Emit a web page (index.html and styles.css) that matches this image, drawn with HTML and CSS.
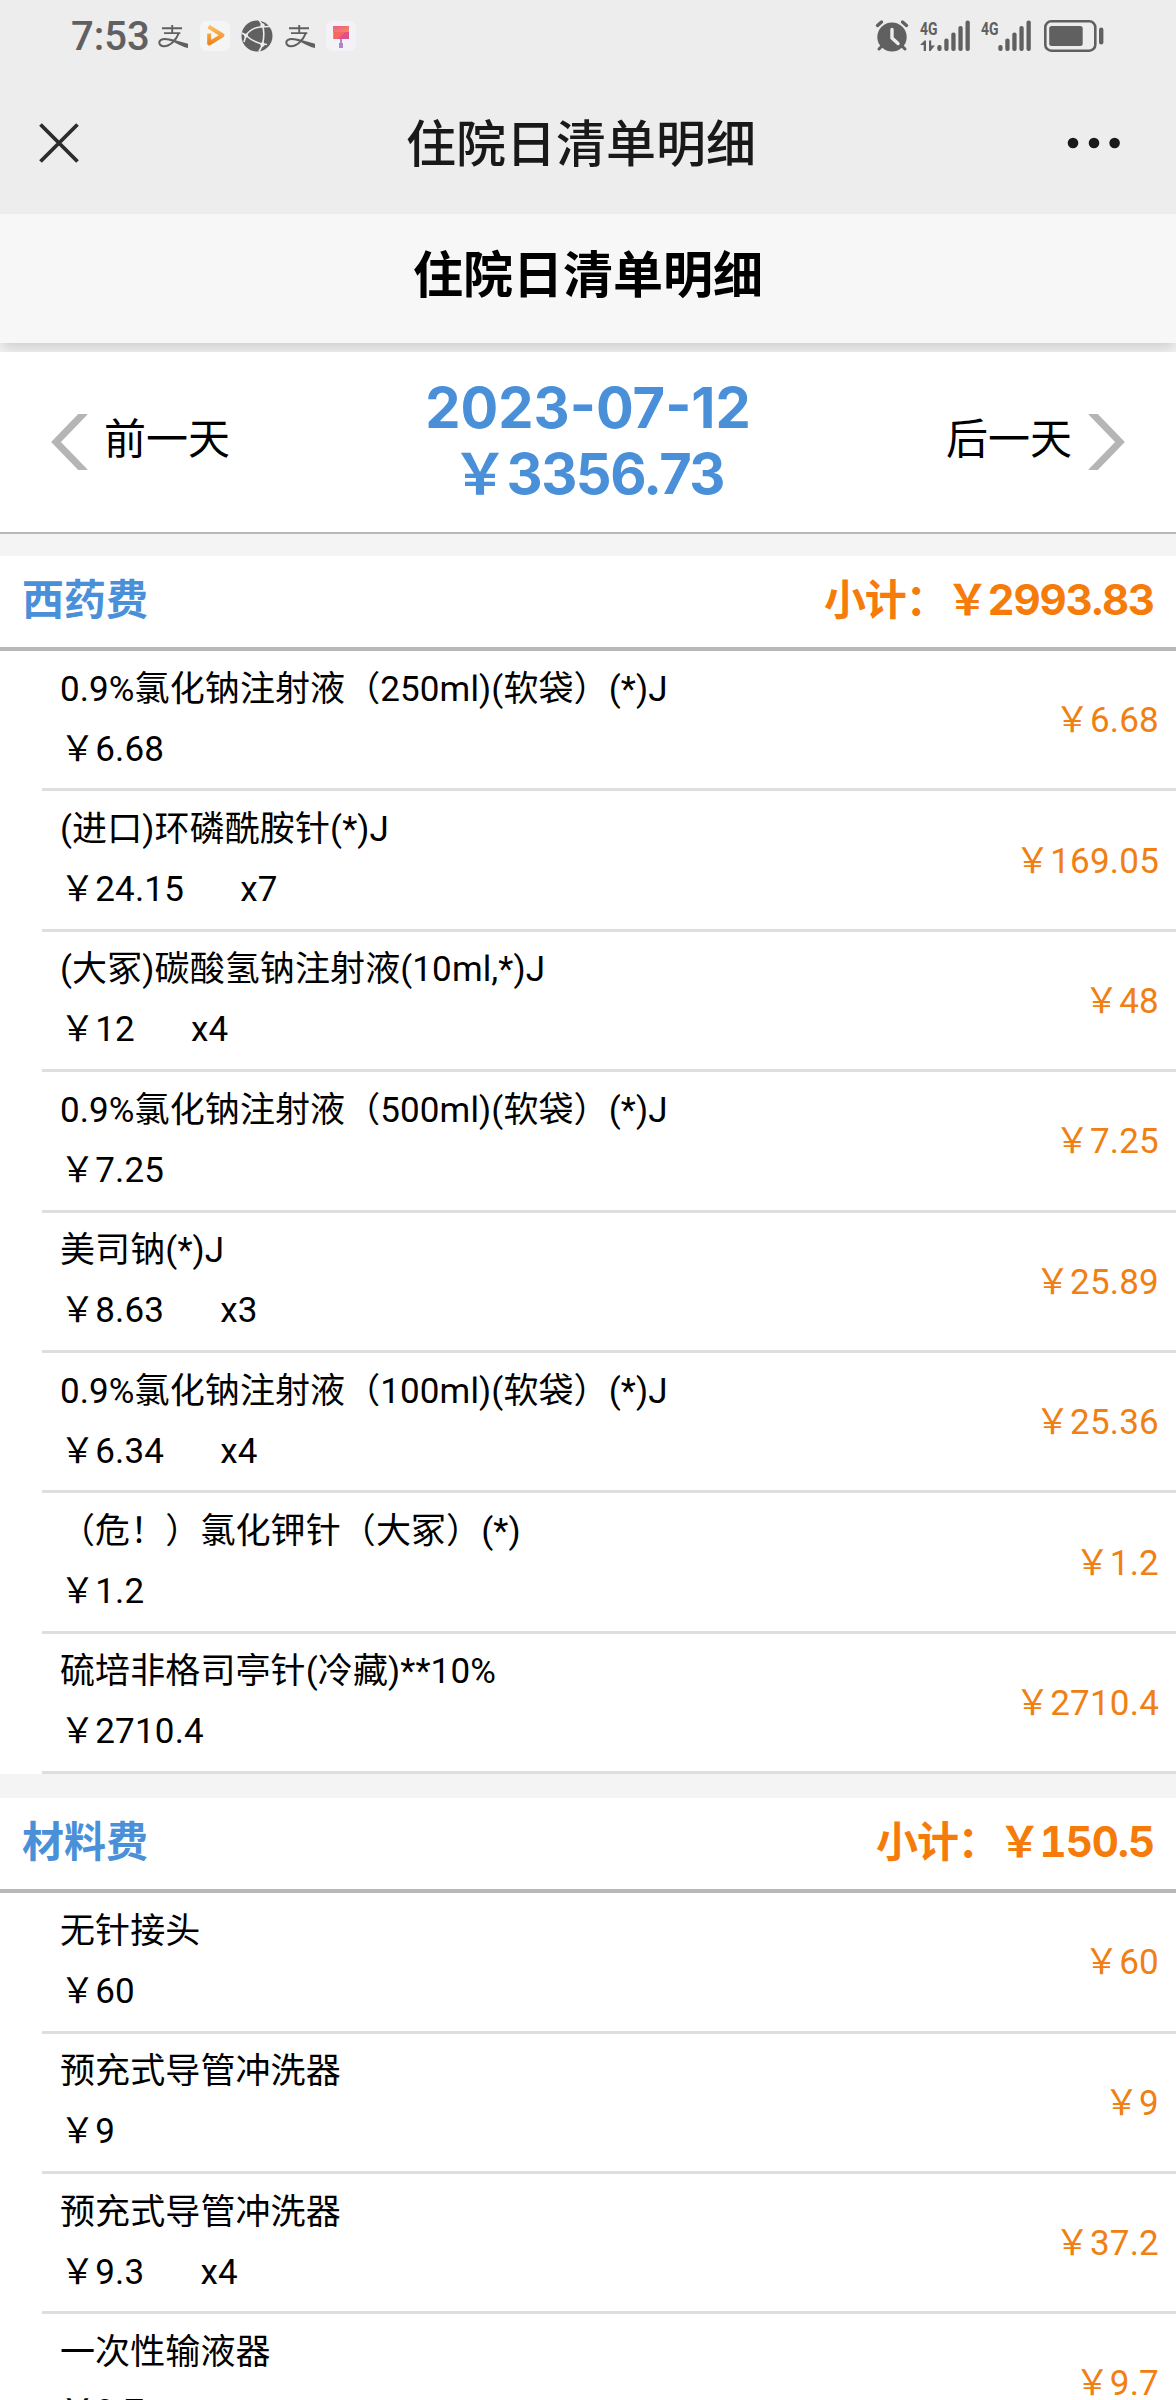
FILE: index.html
```html
<!DOCTYPE html>
<html lang="zh-CN">
<head>
  <meta charset="UTF-8">
  <title>住院日清单明细</title>
  <link rel="stylesheet" href="styles.css">
</head>
<body>

  <div class="status-bar">
    <span class="time">7:53</span>
    <div class="status-left">
      <svg class="icon" viewBox="0 0 30 30">
        <g fill="none" stroke="#606060" stroke-width="1.9">
          <path d="M4 7.3h20M14.2 4v8M6 12.1h16.3"/>
          <path d="M20.8 12.2C18.5 18.5 12 25.6 5.5 25.2 1 24.8 0 20.8 3 18.9c3.5-2 8.5-.5 13 1.3"/>
        </g>
        <path d="M12 17.6c6 1.8 12 4 18 5.1v4.3c-4-.8-9-3.2-14.5-6.3z" fill="#606060"/>
      </svg>
      <svg class="icon" viewBox="0 0 30 30">
        <defs>
          <linearGradient id="play" x1="0" y1="0" x2="0" y2="1">
            <stop offset="0" stop-color="#fbbf5c"/>
            <stop offset="1" stop-color="#ef8420"/>
          </linearGradient>
        </defs>
        <rect width="30" height="30" rx="7" fill="#f4f6f6"/>
        <path d="M8.5 5.5L22.5 14.3 9.2 22.5V12.5" fill="none" stroke="url(#play)" stroke-width="4" stroke-linejoin="round"/>
      </svg>
      <svg class="icon globe" viewBox="0 0 32 32">
        <circle cx="16" cy="16" r="15.5" fill="#606060"/>
        <g fill="none" stroke="#ededed" stroke-width="1.6">
          <path d="M5 15.5C9 9 15 6 30.5 6.5M5 15.5C10 20 16 24 26 24.5M21.5 5C23.5 11 23 18 21.5 25M5 15.5L1 13M5 15.5L3 22M21.5 5L18 0M21.5 25L18 31.5"/>
        </g>
        <circle cx="5" cy="15.5" r="1.9" fill="#ededed"/>
        <circle cx="21.5" cy="5.5" r="2.2" fill="#ededed"/>
        <circle cx="21.5" cy="24.5" r="2.2" fill="#ededed"/>
      </svg>
      <svg class="icon" viewBox="0 0 30 30">
        <g fill="none" stroke="#606060" stroke-width="1.9">
          <path d="M4 7.3h20M14.2 4v8M6 12.1h16.3"/>
          <path d="M20.8 12.2C18.5 18.5 12 25.6 5.5 25.2 1 24.8 0 20.8 3 18.9c3.5-2 8.5-.5 13 1.3"/>
        </g>
        <path d="M12 17.6c6 1.8 12 4 18 5.1v4.3c-4-.8-9-3.2-14.5-6.3z" fill="#606060"/>
      </svg>
      <svg class="icon" viewBox="0 0 30 30">
        <defs>
          <linearGradient id="brush" x1="0" y1="0" x2="1" y2="1">
            <stop offset="0" stop-color="#ef5a86"/>
            <stop offset="1" stop-color="#f58a62"/>
          </linearGradient>
        </defs>
        <rect width="30" height="30" rx="7" fill="#f3f3f7"/>
        <path d="M7 5h16v6H7z" fill="url(#brush)"/>
        <path d="M7.5 11h15.5v7H7.5z" fill="#e0508a"/>
        <path d="M7.5 11h12l-8 7h-4z" fill="#f4685f"/>
        <path d="M14 18h2v4h1v5h-4v-5h1z" fill="#b184d0"/>
      </svg>
    </div>
    <div class="status-right">
      <svg class="alarm" viewBox="0 0 34 32">
        <g fill="none" stroke="#606060" stroke-linecap="round">
          <path d="M2.5 5.5l4-3.5M31.5 5.5l-4-3.5" stroke-width="3.4"/>
          <path d="M7 26l-3 3M27 26l3 3" stroke-width="3"/>
        </g>
        <ellipse cx="17" cy="17" rx="14.7" ry="14.5" fill="#606060"/>
        <path d="M17 9.5v8.5l6 5.5" fill="none" stroke="#ededed" stroke-width="3.4" stroke-linecap="round"/>
      </svg>
      <svg class="signal" viewBox="0 0 50 32">
        <text x="0" y="14.5" textLength="17.5" lengthAdjust="spacingAndGlyphs">4G</text>
        <path d="M0 25l4.5-4.5H6V31H3.7v-6zM9 20.5h2.2V25.5H15L10.5 31H9z"/>
        <rect x="17.3" y="25" width="4.3" height="6" rx="2"/>
        <rect x="24.3" y="18.5" width="4.3" height="12.5" rx="2"/>
        <rect x="31.3" y="12.5" width="4.3" height="18.5" rx="2"/>
        <rect x="38.4" y="6" width="4.3" height="25" rx="2"/>
        <rect x="45.5" y="0.5" width="4.3" height="30.5" rx="2"/>
      </svg>
      <svg class="signal" viewBox="0 0 50 32">
        <text x="0" y="14.5" textLength="17.5" lengthAdjust="spacingAndGlyphs">4G</text>
        <rect x="17.3" y="25" width="4.3" height="6" rx="2"/>
        <rect x="24.3" y="18.5" width="4.3" height="12.5" rx="2"/>
        <rect x="31.3" y="12.5" width="4.3" height="18.5" rx="2"/>
        <rect x="38.4" y="6" width="4.3" height="25" rx="2"/>
        <rect x="45.5" y="0.5" width="4.3" height="30.5" rx="2"/>
      </svg>
      <svg class="battery" viewBox="0 0 60 32">
        <rect x="1.3" y="1.3" width="50" height="29.4" rx="6" fill="none" stroke="#606060" stroke-width="2.6"/>
        <rect x="5.2" y="6" width="33.5" height="20" rx="2.5" fill="#606060"/>
        <rect x="55" y="7.5" width="4.4" height="17" rx="2.2" fill="#606060"/>
      </svg>
    </div>
  </div>

  <div class="title-bar">
    <svg class="close" viewBox="0 0 40 40">
      <path d="M1.5 1.5l37 37M38.5 1.5l-37 37" stroke="#2c2c2c" stroke-width="3.8"/>
    </svg>
    <span class="title">住院日清单明细</span>
    <svg class="more" viewBox="0 0 54 12">
      <circle cx="6" cy="6" r="5.3"/>
      <circle cx="27" cy="6" r="5.3"/>
      <circle cx="47.6" cy="6" r="5.3"/>
    </svg>
  </div>

  <h1>住院日清单明细</h1>

  <div class="day-nav">
    <a class="day prev">
      <svg class="arrow" viewBox="0 0 38 56"><path d="M34 -2L5 28l29 30" /></svg>
      <span>前一天</span>
    </a>
    <div class="summary">
      <div class="date">2023-07-12</div>
      <div class="total">&#xFFE5;3356.73</div>
    </div>
    <a class="day next">
      <span>后一天</span>
      <svg class="arrow" viewBox="0 0 38 56"><path d="M4 -2l29 30L4 58" /></svg>
    </a>
  </div>

  <div class="section">
    <div class="section-head">
      <span class="name">西药费</span>
      <span class="subtotal">小计&#xFF1A;&#xFFE5;2993.83</span>
    </div>
    <ul>
      <li>
        <div class="info"><p>0.9%氯化钠注射液&#xFF08;250ml)(软袋&#xFF09;(*)J</p><p class="price">&#xFFE5;6.68</p></div>
        <span class="amount">&#xFFE5;6.68</span>
      </li>
      <li>
        <div class="info"><p>(进口)环磷酰胺针(*)J</p><p class="price">&#xFFE5;24.15<span class="qty">x7</span></p></div>
        <span class="amount">&#xFFE5;169.05</span>
      </li>
      <li>
        <div class="info"><p>(大冢)碳酸氢钠注射液(10ml,*)J</p><p class="price">&#xFFE5;12<span class="qty">x4</span></p></div>
        <span class="amount">&#xFFE5;48</span>
      </li>
      <li>
        <div class="info"><p>0.9%氯化钠注射液&#xFF08;500ml)(软袋&#xFF09;(*)J</p><p class="price">&#xFFE5;7.25</p></div>
        <span class="amount">&#xFFE5;7.25</span>
      </li>
      <li>
        <div class="info"><p>美司钠(*)J</p><p class="price">&#xFFE5;8.63<span class="qty">x3</span></p></div>
        <span class="amount">&#xFFE5;25.89</span>
      </li>
      <li>
        <div class="info"><p>0.9%氯化钠注射液&#xFF08;100ml)(软袋&#xFF09;(*)J</p><p class="price">&#xFFE5;6.34<span class="qty">x4</span></p></div>
        <span class="amount">&#xFFE5;25.36</span>
      </li>
      <li>
        <div class="info"><p>&#xFF08;危&#xFF01;&#xFF09;氯化钾针&#xFF08;大冢&#xFF09;(*)</p><p class="price">&#xFFE5;1.2</p></div>
        <span class="amount">&#xFFE5;1.2</span>
      </li>
      <li>
        <div class="info"><p>硫培非格司亭针(冷藏)**10%</p><p class="price">&#xFFE5;2710.4</p></div>
        <span class="amount">&#xFFE5;2710.4</span>
      </li>
    </ul>
  </div>

  <div class="section">
    <div class="section-head">
      <span class="name">材料费</span>
      <span class="subtotal">小计&#xFF1A;&#xFFE5;150.5</span>
    </div>
    <ul>
      <li>
        <div class="info"><p>无针接头</p><p class="price">&#xFFE5;60</p></div>
        <span class="amount">&#xFFE5;60</span>
      </li>
      <li>
        <div class="info"><p>预充式导管冲洗器</p><p class="price">&#xFFE5;9</p></div>
        <span class="amount">&#xFFE5;9</span>
      </li>
      <li>
        <div class="info"><p>预充式导管冲洗器</p><p class="price">&#xFFE5;9.3<span class="qty">x4</span></p></div>
        <span class="amount">&#xFFE5;37.2</span>
      </li>
      <li>
        <div class="info"><p>一次性输液器</p><p class="price">&#xFFE5;9.7</p></div>
        <span class="amount">&#xFFE5;9.7</span>
      </li>
    </ul>
  </div>

</body>
</html>
```
FILE: styles.css
```css
* {
  box-sizing: border-box;
}

body {
  margin: 0;
  height: 2400px;
  overflow: hidden;
  background-color: #f4f4f4;
  color: #000;
  font-family: Roboto, "Noto Sans CJK SC", sans-serif;
  font-size: 35px;
}

svg {
  display: block;
  flex: none;
  overflow: visible;
}

.status-bar {
  display: flex;
  align-items: center;
  height: 72px;
  padding: 0 72px 0 71px;
  background-color: #ededed;
}

.time {
  width: 87px;
  padding-top: 2px;
  color: #606060;
  font-size: 40px;
  font-weight: 500;
  line-height: 70px;
}

.status-left {
  display: flex;
  align-items: center;
  gap: 11.5px;
}

.icon {
  width: 30px;
  height: 30px;
}

.globe {
  width: 32px;
  height: 32px;
}

.status-right {
  display: flex;
  align-items: center;
  gap: 11px;
  margin-left: auto;
}

.alarm {
  width: 34px;
  height: 32px;
}

.signal {
  width: 50px;
  height: 32px;
  fill: #606060;
}

.signal text {
  font-family: Roboto, sans-serif;
  font-size: 19px;
  font-weight: bold;
}

.battery {
  width: 60px;
  height: 32px;
  margin-left: 2px;
}

.title-bar {
  display: flex;
  align-items: center;
  justify-content: space-between;
  height: 142px;
  padding: 0 55px 0 39px;
  background-color: #ededed;
}

.close {
  width: 40px;
  height: 40px;
}

.title {
  padding: 0 0 6px 16px;
  color: #191919;
  font-size: 50px;
  font-weight: 500;
}

.more {
  width: 54px;
  height: 12px;
  fill: #191919;
}

h1 {
  margin: 0 0 9px;
  height: 129px;
  background-color: #f7f7f7;
  box-shadow: 0 8px 12px -2px rgba(0,0,0,0.15);
  font-size: 50px;
  line-height: 125px;
  text-align: center;
}

.day-nav {
  position: relative;
  display: flex;
  align-items: center;
  justify-content: space-between;
  height: 182px;
  padding: 0 51px;
  background-color: #fff;
  border-bottom: 2px solid #b8b8b8;
}

.day {
  display: flex;
  align-items: center;
  gap: 15px;
  font-size: 42px;
}

.day span {
  padding-bottom: 13px;
}

.arrow {
  width: 38px;
  height: 56px;
  overflow: hidden;
  fill: none;
  stroke: #b5b5b5;
  stroke-width: 7;
}

.summary {
  padding-bottom: 2px;
  color: #4a90d9;
  font-family: Inter, "Noto Sans CJK SC", sans-serif;
  font-size: 56px;
  font-weight: bold;
  line-height: 66px;
  text-align: center;
}

.total {
  letter-spacing: -1.5px;
}

.section {
  margin-top: 22px;
}

.section + .section {
  margin-top: 24px;
}

.section-head {
  display: flex;
  align-items: center;
  justify-content: space-between;
  height: 95px;
  padding: 0 22px 3px;
  background-color: #fff;
  border-bottom: 4px solid #b8b8b8;
  font-family: Inter, "Noto Sans CJK SC", sans-serif;
  font-size: 42px;
  font-weight: bold;
  line-height: 60px;
}

.name {
  color: #4a90d9;
}

.subtotal {
  color: #f57c0a;
  font-variant-numeric: tabular-nums;
  letter-spacing: -1.1px;
}

ul {
  margin: 0;
  padding: 0 0 0 42px;
  background-color: #fff;
  list-style: none;
}

li {
  display: flex;
  align-items: center;
  justify-content: space-between;
  height: 140.4px;
  padding: 0 17px 0 18px;
  border-bottom: 3px solid #dedede;
}

.info p {
  margin: 0;
  height: 60px;
  line-height: 60px;
  letter-spacing: 0.1px;
  white-space: nowrap;
}

.info .price {
  letter-spacing: 0.2px;
}

.qty {
  margin-left: 56px;
}

.amount {
  padding-bottom: 6px;
  color: #f08013;
  letter-spacing: 0.2px;
}
```
